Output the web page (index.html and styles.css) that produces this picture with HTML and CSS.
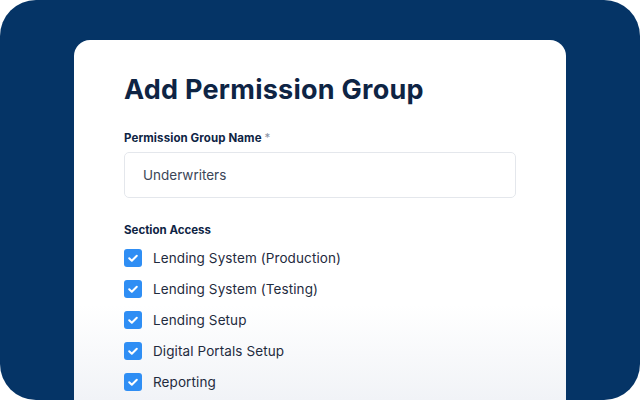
FILE: index.html
```html
<!DOCTYPE html>
<html lang="en">
<head>
    <meta charset="UTF-8">
    <title>Add Permission Group</title>
    <link rel="stylesheet" href="styles.css">
</head>
<body>
    <div class="frame">
        <div class="card">
            <h1>Add Permission Group</h1>

            <label class="field-label" for="groupName">Permission Group Name <span class="req">*</span></label>
            <div class="input-box" id="groupName">Underwriters</div>

            <h2 class="section-label">Section Access</h2>
            <ul class="access-list">
                <li><span class="check"><svg viewBox="0 0 18 18" width="18" height="18"><path d="M5.2 9.3l2.6 2.5 5-5" fill="none" stroke="#fff" stroke-width="2" stroke-linecap="round" stroke-linejoin="round"/></svg></span>Lending System (Production)</li>
                <li><span class="check"><svg viewBox="0 0 18 18" width="18" height="18"><path d="M5.2 9.3l2.6 2.5 5-5" fill="none" stroke="#fff" stroke-width="2" stroke-linecap="round" stroke-linejoin="round"/></svg></span>Lending System (Testing)</li>
                <li><span class="check"><svg viewBox="0 0 18 18" width="18" height="18"><path d="M5.2 9.3l2.6 2.5 5-5" fill="none" stroke="#fff" stroke-width="2" stroke-linecap="round" stroke-linejoin="round"/></svg></span>Lending Setup</li>
                <li><span class="check"><svg viewBox="0 0 18 18" width="18" height="18"><path d="M5.2 9.3l2.6 2.5 5-5" fill="none" stroke="#fff" stroke-width="2" stroke-linecap="round" stroke-linejoin="round"/></svg></span>Digital Portals Setup</li>
                <li><span class="check"><svg viewBox="0 0 18 18" width="18" height="18"><path d="M5.2 9.3l2.6 2.5 5-5" fill="none" stroke="#fff" stroke-width="2" stroke-linecap="round" stroke-linejoin="round"/></svg></span>Reporting</li>
            </ul>
        </div>
    </div>
</body>
</html>
```
FILE: styles.css
```css
body {
    margin: 0;
    background: #fff;
    font-family: Inter, "Noto Sans", sans-serif;
}
.frame {
    width: 640px;
    height: 400px;
    box-sizing: border-box;
    padding: 40px 74px 0;
    background: #053466;
    border-radius: 36px;
    overflow: hidden;
}
.card {
    height: 400px;
    box-sizing: border-box;
    padding: 34px 50px 0;
    border-radius: 16px 16px 0 0;
    background: linear-gradient(to bottom, #fff 0, #fff 265px, #f1f3f7 360px);
}
h1 {
    margin: 0 0 24px;
    font-size: 27px;
    line-height: 32px;
    font-weight: 700;
    letter-spacing: 0.25px;
    color: #0e2444;
}
.field-label {
    display: block;
    font-size: 11.5px;
    font-weight: 700;
    letter-spacing: 0.1px;
    color: #0e2444;
    line-height: 16px;
}
.req {
    color: #8a93a3;
    font-weight: 400;
}
.input-box {
    margin-top: 6px;
    height: 46px;
    box-sizing: border-box;
    padding: 0 18px;
    border: 1px solid #e4e7ec;
    border-radius: 5px;
    display: flex;
    align-items: center;
    font-size: 13.5px;
    color: #3b4657;
}
.section-label {
    margin: 24px 0 0;
    font-size: 11.5px;
    font-weight: 700;
    line-height: 16px;
    color: #0e2444;
}
.access-list {
    list-style: none;
    margin: 4px 0 0;
    padding: 0;
}
.access-list li {
    display: flex;
    align-items: center;
    gap: 11px;
    height: 31px;
    font-size: 13.5px;
    letter-spacing: 0.1px;
    color: #1f2b3e;
}
.check {
    width: 18px;
    height: 18px;
    border-radius: 3px;
    background: #2f8ef4;
    display: flex;
}
```
